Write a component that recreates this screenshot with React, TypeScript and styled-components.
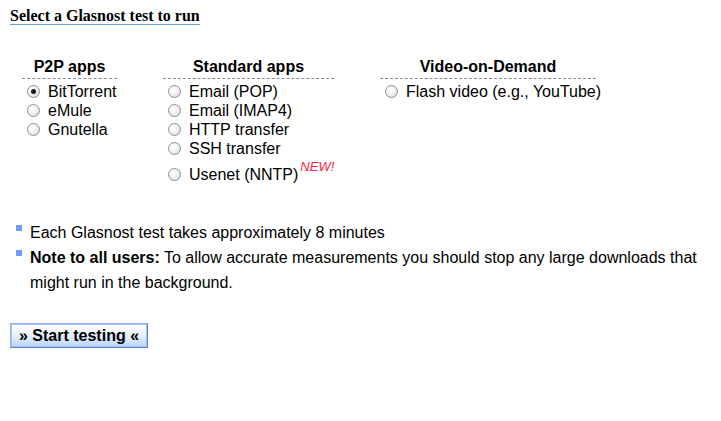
import * as React from 'react';
import styled, { createGlobalStyle } from 'styled-components';

const GlobalStyle = createGlobalStyle`
  html, body {
    margin: 0;
    padding: 0;
    background: #fff;
  }
  body {
    font-family: 'Liberation Sans', Arial, sans-serif;
    color: #000;
  }
`;

const Page = styled.div`
  padding: 8px 10px 0 10px;
`;

const Title = styled.h2`
  width: fit-content;
  margin: 0;
  font-family: 'Liberation Serif', 'Times New Roman', serif;
  font-size: 16px;
  font-weight: bold;
  line-height: 16px;
  border-bottom: 1px solid #6d9de0;
`;

const Columns = styled.div`
  display: flex;
  align-items: flex-start;
  gap: 46px;
  margin: 33px 0 0 12px;
`;

const Column = styled.div<{ $width: number }>`
  width: ${(p) => p.$width}px;
`;

const ColumnHead = styled.div`
  text-align: center;
  font-size: 16px;
  font-weight: bold;
  line-height: 18px;
  padding-bottom: 2px;
  border-bottom: 1px dashed #8a8a8a;
`;

const Options = styled.div`
  padding: 3px 0 0 5px;
`;

const Option = styled.label<{ $tall?: boolean }>`
  display: flex;
  align-items: center;
  margin-top: ${(p) => (p.$tall ? 7 : 0)}px;
  font-size: 16px;
  line-height: 19px;
  white-space: nowrap;
  cursor: pointer;
`;

const Radio = styled.span<{ $checked?: boolean }>`
  position: relative;
  box-sizing: border-box;
  width: 13px;
  height: 13px;
  margin-right: 8px;
  border-radius: 50%;
  border: 1px solid #8e8f8f;
  background: radial-gradient(circle at 35% 35%, #ffffff 0%, #f2f2f2 45%, #d6d6d6 100%);
  flex-shrink: 0;

  &::after {
    content: '';
    display: ${(p) => (p.$checked ? 'block' : 'none')};
    position: absolute;
    left: 3px;
    top: 3px;
    width: 5px;
    height: 5px;
    border-radius: 50%;
    background: #1a1a1a;
  }
`;

const NewTag = styled.span`
  align-self: flex-start;
  color: #ff1f3d;
  font-style: italic;
  font-size: 13px;
  line-height: 13px;
  margin: -5px 0 0 2px;
`;

const Notes = styled.ul`
  list-style: none;
  margin: 36px 0 0 0;
  padding: 0;
`;

const Note = styled.li`
  position: relative;
  padding-left: 20px;
  font-size: 16px;
  line-height: 25px;

  &::before {
    content: '';
    position: absolute;
    left: 6px;
    top: 5px;
    width: 6px;
    height: 6px;
    background: #6ba0f4;
  }
`;

const Button = styled.button`
  display: block;
  margin-top: 28px;
  padding: 0 8px;
  height: 25px;
  font-family: 'Liberation Sans', Arial, sans-serif;
  font-size: 16px;
  font-weight: bold;
  color: #000;
  background: linear-gradient(to bottom, #ffffff 0%, #eaf2fd 45%, #b9d4f8 100%);
  border: 1px solid #8ab2ee;
  border-right-color: #5a84c6;
  border-bottom-color: #5a84c6;
  box-shadow: inset 0 0 0 1px #a9c6f3;
  cursor: pointer;
`;

type Group = {
  title: string;
  width: number;
  items: { label: string; checked?: boolean; isNew?: boolean }[];
};

const groups: Group[] = [
  {
    title: 'P2P apps',
    width: 95,
    items: [{ label: 'BitTorrent', checked: true }, { label: 'eMule' }, { label: 'Gnutella' }],
  },
  {
    title: 'Standard apps',
    width: 171,
    items: [
      { label: 'Email (POP)' },
      { label: 'Email (IMAP4)' },
      { label: 'HTTP transfer' },
      { label: 'SSH transfer' },
      { label: 'Usenet (NNTP)', isNew: true },
    ],
  },
  {
    title: 'Video-on-Demand',
    width: 216,
    items: [{ label: 'Flash video (e.g., YouTube)' }],
  },
];

export default function App() {
  return (
    <Page>
      <GlobalStyle />
      <Title>Select a Glasnost test to run</Title>
      <Columns>
        {groups.map((g) => (
          <Column key={g.title} $width={g.width}>
            <ColumnHead>{g.title}</ColumnHead>
            <Options>
              {g.items.map((it) => (
                <Option key={it.label} $tall={it.isNew}>
                  <Radio $checked={it.checked} />
                  {it.label}
                  {it.isNew && <NewTag>NEW!</NewTag>}
                </Option>
              ))}
            </Options>
          </Column>
        ))}
      </Columns>
      <Notes>
        <Note>Each Glasnost test takes approximately 8 minutes</Note>
        <Note>
          <b>Note to all users:</b> To allow accurate measurements you should stop any large downloads that
          might run in the background.
        </Note>
      </Notes>
      <Button>» Start testing «</Button>
    </Page>
  );
}
